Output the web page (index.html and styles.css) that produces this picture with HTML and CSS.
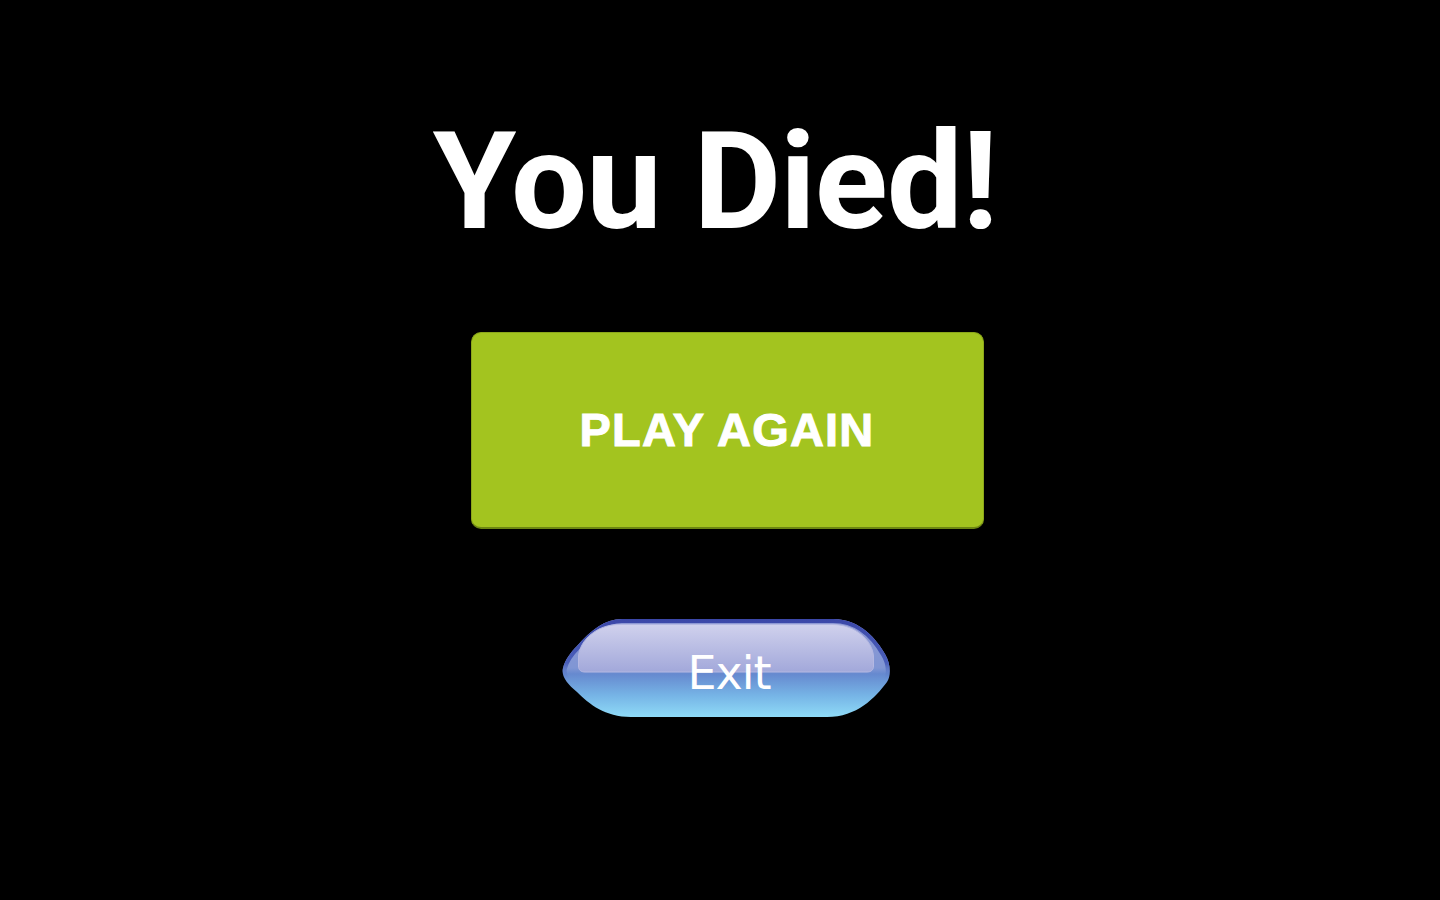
FILE: index.html
```html
<!DOCTYPE html>
<html lang="en">
<head>
<meta charset="utf-8">
<title>You Died!</title>
<link rel="stylesheet" href="styles.css">
</head>
<body>
<main class="screen">
  <h1 class="title">You Died!</h1>
  <button class="play-btn" type="button">PLAY AGAIN</button>
  <button class="exit-btn" type="button">
    <svg class="exit-shape" viewBox="0 0 330 100" width="330" height="100" aria-hidden="true">
      <defs>
        <linearGradient id="body" x1="0" y1="0" x2="0" y2="1">
          <stop offset="0" stop-color="#8f98d4"/>
          <stop offset="0.5" stop-color="#8096d4"/>
          <stop offset="0.56" stop-color="#6689cf"/>
          <stop offset="0.78" stop-color="#76b4e6"/>
          <stop offset="1" stop-color="#8fdbf7"/>
        </linearGradient>
        <linearGradient id="rim" x1="0" y1="0" x2="0" y2="1">
          <stop offset="0" stop-color="#3b47a8"/>
          <stop offset="0.45" stop-color="#4a5fba"/>
          <stop offset="0.62" stop-color="#5b83cb" stop-opacity="0"/>
          <stop offset="1" stop-color="#5b83cb" stop-opacity="0"/>
        </linearGradient>
        <linearGradient id="gloss" x1="0" y1="0" x2="0" y2="1">
          <stop offset="0" stop-color="#d0d1ed"/>
          <stop offset="1" stop-color="#a2a8da"/>
        </linearGradient>
        <clipPath id="clip">
          <path d="M61,1 L272,1 C300,1 316,22 324,36 C330,46 330,58 326,64 C314,80 296,99 266,99 L70,99 C44,99 28,86 16,74 C6,66 0,58 2,50 C4,42 10,34 16,28 C30,12 44,1 61,1 Z"/>
        </clipPath>
      </defs>
      <path fill="url(#body)" d="M61,1 L272,1 C300,1 316,22 324,36 C330,46 330,58 326,64 C314,80 296,99 266,99 L70,99 C44,99 28,86 16,74 C6,66 0,58 2,50 C4,42 10,34 16,28 C30,12 44,1 61,1 Z"/>
      <path clip-path="url(#clip)" fill="none" stroke="url(#rim)" stroke-width="8" d="M61,1 L272,1 C300,1 316,22 324,36 C330,46 330,58 326,64 C314,80 296,99 266,99 L70,99 C44,99 28,86 16,74 C6,66 0,58 2,50 C4,42 10,34 16,28 C30,12 44,1 61,1 Z"/>
      <path fill="url(#gloss)" stroke="#b4b8e2" stroke-width="1" d="M58,6.5 H272 C294,6.5 311,22 312.5,38 L312.5,48 C312.5,52 310,54 306,54 H24 C20,54 17.5,52 17.5,48 L17.5,38 C19,22 36,6.5 58,6.5 Z"/>
    </svg>
    <span class="exit-label">Exit</span>
  </button>
</main>
</body>
</html>
```

FILE: styles.css
```css
html, body {
  margin: 0;
  padding: 0;
  background: #000;
  height: 100%;
}

.screen {
  display: flex;
  flex-direction: column;
  align-items: center;
  min-height: 100vh;
}

.title {
  margin: 115px 10px 0 0;
  font-family: Roboto, "Liberation Sans", sans-serif;
  font-weight: 700;
  font-size: 135px;
  line-height: 1;
  color: #fff;
  letter-spacing: -1px;
}

.play-btn {
  margin: 82px 0 0 14px;
  width: 513px;
  height: 197px;
  box-sizing: border-box;
  background: #a3c41f;
  border: 1px solid #8ca71a;
  border-bottom: 2px solid #6c8612;
  border-radius: 10px;
  color: #fff;
  font-family: "Liberation Sans", Arial, sans-serif;
  font-weight: 700;
  font-size: 47px;
  letter-spacing: 1.2px;
  -webkit-text-stroke: 1px #fff;
  padding: 0 0 2px;
  display: flex;
  align-items: center;
  justify-content: center;
  cursor: pointer;
}

.exit-btn {
  position: relative;
  margin: 89px 0 0 12px;
  width: 330px;
  height: 100px;
  padding: 0;
  border: 0;
  background: transparent;
  display: flex;
  align-items: center;
  justify-content: center;
  cursor: pointer;
}

.exit-shape {
  position: absolute;
  left: 0;
  top: 0;
  display: block;
}

.exit-label {
  position: relative;
  padding: 10px 0 0 6px;
  font-family: "DejaVu Sans", Verdana, sans-serif;
  font-size: 46px;
  line-height: 1;
  letter-spacing: -1px;
  color: #fff;
}
```
